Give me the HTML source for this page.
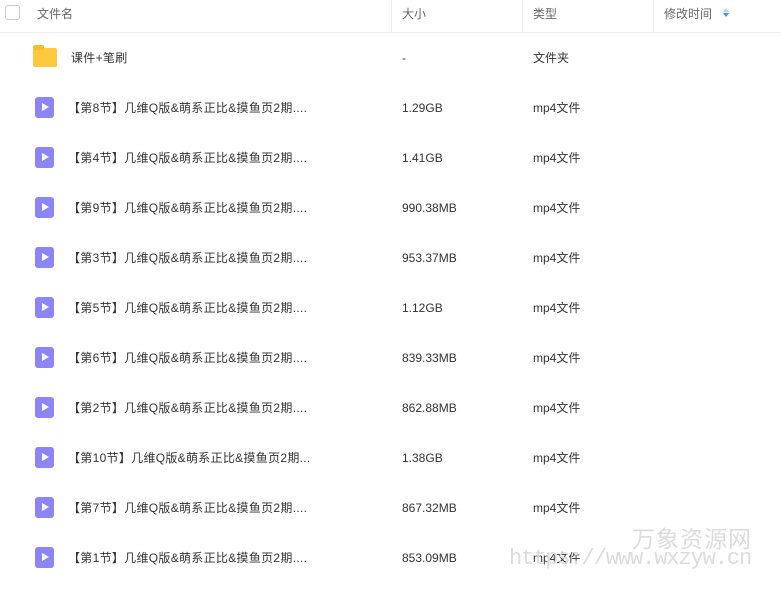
<!DOCTYPE html><html><head><meta charset="utf-8"><style>
body{margin:0;width:781px;height:594px;background:#fff;font-family:"Liberation Sans","Noto Sans CJK SC",sans-serif;font-size:12px;color:#333;position:relative;overflow:hidden}
span{line-height:16px;white-space:nowrap}
.hd{position:absolute;top:0;left:0;width:781px;height:32px;border-bottom:1px solid #f0f0f0;color:#666}
.hd span{position:absolute;top:6px}
.sep{position:absolute;top:0;height:32px;width:1px;background:#eee}
.row{position:absolute;left:0;width:781px;height:50px}
.row span{position:absolute;top:17px}
.t{letter-spacing:0.3px}
.ic{position:absolute;left:35px;top:14px;width:19px;height:21px;background:#8c85f6;border-radius:3px}
.ic:after{content:"";position:absolute;left:7px;top:6px;border-left:7px solid #fff;border-top:4.5px solid transparent;border-bottom:4.5px solid transparent}
.wm{position:absolute;color:#dcdcdc}
</style></head><body>
<div class="hd"><div style="position:absolute;left:5px;top:5px;width:13px;height:13px;border:1px solid #ccc;border-radius:3px"></div>
<span style="left:37px">文件名</span><div class="sep" style="left:391px"></div><span style="left:402px">大小</span><div class="sep" style="left:522px"></div><span style="left:533px">类型</span><div class="sep" style="left:653px"></div><span style="left:664px">修改时间</span>
<div style="position:absolute;left:723px;top:8px;border:3px solid transparent;border-bottom:4px solid #ccd;border-top:0"></div><div style="position:absolute;left:723px;top:13px;border:3px solid transparent;border-top:4px solid #2a9bf2;border-bottom:0"></div></div>
<div class="row" style="top:33px"><div style="position:absolute;left:33px;top:15px;width:24px;height:19px;background:#fcc93c;border-radius:2px"></div><div style="position:absolute;left:33px;top:12px;width:11px;height:5px;background:#f7be2c;border-radius:2px 2px 0 0"></div><span style="left:71px" class="t">课件+笔刷</span><span style="left:402px">-</span><span style="left:533px">文件夹</span></div>
<div class="row" style="top:83px"><div class="ic"></div><span class="t" style="left:68px">【第8节】几维Q版&amp;萌系正比&amp;摸鱼页2期....</span><span style="left:402px">1.29GB</span><span style="left:533px">mp4文件</span></div>
<div class="row" style="top:133px"><div class="ic"></div><span class="t" style="left:68px">【第4节】几维Q版&amp;萌系正比&amp;摸鱼页2期....</span><span style="left:402px">1.41GB</span><span style="left:533px">mp4文件</span></div>
<div class="row" style="top:183px"><div class="ic"></div><span class="t" style="left:68px">【第9节】几维Q版&amp;萌系正比&amp;摸鱼页2期....</span><span style="left:402px">990.38MB</span><span style="left:533px">mp4文件</span></div>
<div class="row" style="top:233px"><div class="ic"></div><span class="t" style="left:68px">【第3节】几维Q版&amp;萌系正比&amp;摸鱼页2期....</span><span style="left:402px">953.37MB</span><span style="left:533px">mp4文件</span></div>
<div class="row" style="top:283px"><div class="ic"></div><span class="t" style="left:68px">【第5节】几维Q版&amp;萌系正比&amp;摸鱼页2期....</span><span style="left:402px">1.12GB</span><span style="left:533px">mp4文件</span></div>
<div class="row" style="top:333px"><div class="ic"></div><span class="t" style="left:68px">【第6节】几维Q版&amp;萌系正比&amp;摸鱼页2期....</span><span style="left:402px">839.33MB</span><span style="left:533px">mp4文件</span></div>
<div class="row" style="top:383px"><div class="ic"></div><span class="t" style="left:68px">【第2节】几维Q版&amp;萌系正比&amp;摸鱼页2期....</span><span style="left:402px">862.88MB</span><span style="left:533px">mp4文件</span></div>
<div class="row" style="top:433px"><div class="ic"></div><span class="t" style="left:68px">【第10节】几维Q版&amp;萌系正比&amp;摸鱼页2期...</span><span style="left:402px">1.38GB</span><span style="left:533px">mp4文件</span></div>
<div class="row" style="top:483px"><div class="ic"></div><span class="t" style="left:68px">【第7节】几维Q版&amp;萌系正比&amp;摸鱼页2期....</span><span style="left:402px">867.32MB</span><span style="left:533px">mp4文件</span></div>
<div class="row" style="top:533px"><div class="ic"></div><span class="t" style="left:68px">【第1节】几维Q版&amp;萌系正比&amp;摸鱼页2期....</span><span style="left:402px">853.09MB</span><span style="left:533px">mp4文件</span></div>
<div class="wm" style="left:632px;top:520px;font-size:23px;letter-spacing:1px">万象资源网</div>
<div class="wm" style="left:509px;top:546px;font-size:22px;font-family:'Liberation Mono',monospace;letter-spacing:-1.1px">https://www.wxzyw.cn</div>
</body></html>
